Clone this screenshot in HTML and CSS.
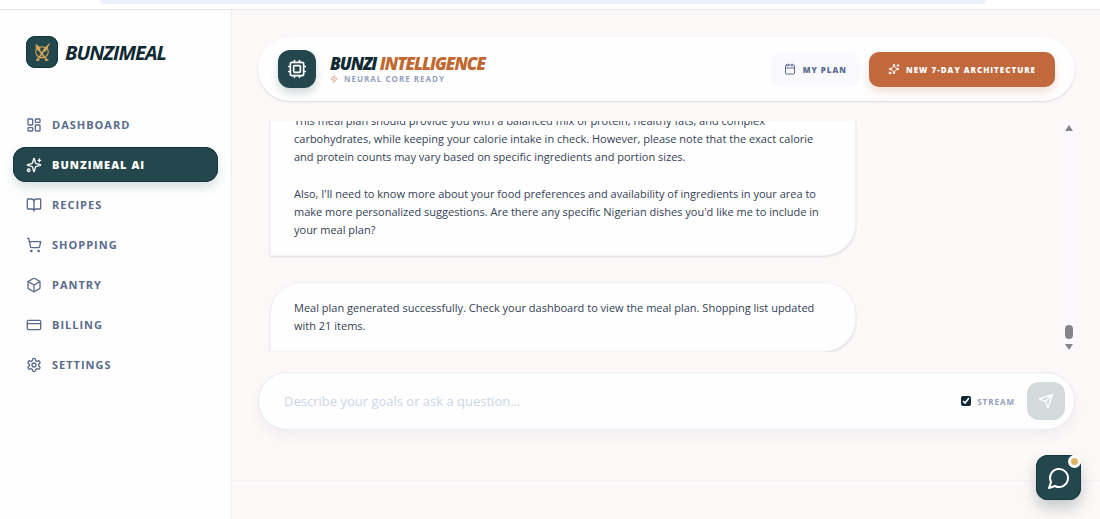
FILE: index.html
```
<!DOCTYPE html>
<html lang="en">

<head>
    <meta charset="UTF-8">
    <meta name="viewport" content="width=device-width, initial-scale=1.0">
    <title>BunziMeal AI</title>
    <link rel="stylesheet" href="styles.css">
</head>

<body>
    <!-- Top strip -->
    <div class="top-strip">
        <div class="top-pill"></div>
    </div>

    <div class="app">
        <!-- Sidebar -->
        <aside class="sidebar">
            <a href="#" class="brand">
                <span class="brand-logo">
                    <svg viewBox="0 0 32 32" width="32" height="32" fill="none" stroke="#d9a857" stroke-linecap="round">
                        <path d="M11 12a6.500 6.500 0 0 0 1 8.500M21 12a6.500 6.500 0 0 1-1 8.500M13.500 11.500q2.500-1.500 5 0" stroke-width="1.200" />
                        <path d="M13 14l7.500 9.500M11.500 23.500L21 10.500" stroke-width="1.500" />
                        <path d="M10 9l.5 4 3 2 .5-3zM23 8l-6 6.500 2 .5z" fill="#d9a857" stroke-width="1" />
                        <path d="M10.500 24h2.500M19.500 24h2.500M14 21.500h4" stroke-width="1.300" />
                    </svg>
                </span>
                <span class="brand-name">BUNZIMEAL</span>
            </a>

            <nav class="menu">
                <a href="#">
                    <svg class="icon" viewBox="0 0 24 24"><rect x="3" y="3" width="7" height="9" rx="1" /><rect x="14" y="3" width="7" height="5" rx="1" /><rect x="14" y="12" width="7" height="9" rx="1" /><rect x="3" y="16" width="7" height="5" rx="1" /></svg>
                    Dashboard
                </a>
                <a href="#" class="active">
                    <svg class="icon" viewBox="0 0 24 24"><path d="M9.937 15.500A2 2 0 0 0 8.500 14.063l-6.135-1.582a.5.5 0 0 1 0-.962L8.500 9.936A2 2 0 0 0 9.937 8.500l1.582-6.135a.5.5 0 0 1 .963 0L14.063 8.500A2 2 0 0 0 15.500 9.937l6.135 1.581a.5.5 0 0 1 0 .964L15.500 14.063a2 2 0 0 0-1.437 1.437l-1.582 6.135a.5.5 0 0 1-.963 0z" /><path d="M20 3v4M22 5h-4" /><circle cx="4" cy="20" r="2" /></svg>
                    BunziMeal AI
                </a>
                <a href="#">
                    <svg class="icon" viewBox="0 0 24 24"><path d="M12 7v14M3 18a1 1 0 0 1-1-1V4a1 1 0 0 1 1-1h5a4 4 0 0 1 4 4 4 4 0 0 1 4-4h5a1 1 0 0 1 1 1v13a1 1 0 0 1-1 1h-6a3 3 0 0 0-3 3 3 3 0 0 0-3-3z" /></svg>
                    Recipes
                </a>
                <a href="#">
                    <svg class="icon" viewBox="0 0 24 24"><circle cx="8" cy="21" r="1" /><circle cx="19" cy="21" r="1" /><path d="M2.050 2.050h2l2.660 12.420a2 2 0 0 0 2 1.580h9.780a2 2 0 0 0 1.950-1.570l1.650-7.430H5.120" /></svg>
                    Shopping
                </a>
                <a href="#">
                    <svg class="icon" viewBox="0 0 24 24"><path d="M21 8a2 2 0 0 0-1-1.730l-7-4a2 2 0 0 0-2 0l-7 4A2 2 0 0 0 3 8v8a2 2 0 0 0 1 1.730l7 4a2 2 0 0 0 2 0l7-4A2 2 0 0 0 21 16z" /><path d="M3.300 7l8.700 5 8.700-5M12 22V12" /></svg>
                    Pantry
                </a>
                <a href="#">
                    <svg class="icon" viewBox="0 0 24 24"><rect x="2" y="5" width="20" height="14" rx="2" /><path d="M2 10h20" /></svg>
                    Billing
                </a>
                <a href="#">
                    <svg class="icon" viewBox="0 0 24 24"><path d="M12.220 2h-.44a2 2 0 0 0-2 2v.18a2 2 0 0 1-1 1.730l-.43.25a2 2 0 0 1-2 0l-.15-.08a2 2 0 0 0-2.730.73l-.22.38a2 2 0 0 0 .73 2.730l.15.1a2 2 0 0 1 1 1.720v.51a2 2 0 0 1-1 1.740l-.15.09a2 2 0 0 0-.73 2.730l.22.38a2 2 0 0 0 2.730.73l.15-.08a2 2 0 0 1 2 0l.43.25a2 2 0 0 1 1 1.730V20a2 2 0 0 0 2 2h.44a2 2 0 0 0 2-2v-.18a2 2 0 0 1 1-1.730l.43-.25a2 2 0 0 1 2 0l.15.08a2 2 0 0 0 2.730-.73l.22-.39a2 2 0 0 0-.73-2.730l-.15-.08a2 2 0 0 1-1-1.740v-.5a2 2 0 0 1 1-1.740l.15-.09a2 2 0 0 0 .73-2.730l-.22-.38a2 2 0 0 0-2.730-.73l-.15.08a2 2 0 0 1-2 0l-.43-.25a2 2 0 0 1-1-1.730V4a2 2 0 0 0-2-2z" /><circle cx="12" cy="12" r="3" /></svg>
                    Settings
                </a>
            </nav>
        </aside>

        <main class="main">
            <div class="content">
                <!-- Header -->
                <header class="header">
                    <div class="header-icon">
                        <svg class="icon" viewBox="0 0 24 24"><rect x="4" y="4" width="16" height="16" rx="2" /><rect x="8" y="8" width="8" height="8" rx="1" /><path d="M15 2v2M15 20v2M2 15h2M2 9h2M20 15h2M20 9h2M9 2v2M9 20v2" /></svg>
                    </div>
                    <div class="header-text">
                        <h1>BUNZI <span>INTELLIGENCE</span></h1>
                        <p>
                            <svg class="icon" viewBox="0 0 24 24"><path d="M4 14a1 1 0 0 1-.78-1.630l9.900-10.200a.5.5 0 0 1 .86.46l-1.920 6.020A1 1 0 0 0 13 10h7a1 1 0 0 1 .78 1.630l-9.900 10.200a.5.5 0 0 1-.86-.46l1.920-6.020A1 1 0 0 0 11 14z" /></svg>
                            Neural Core Ready
                        </p>
                    </div>
                    <div class="header-actions">
                        <button type="button" class="btn btn-light">
                            <svg class="icon" viewBox="0 0 24 24"><path d="M8 2v4M16 2v4M3 10h18" /><rect x="3" y="4" width="18" height="18" rx="2" /></svg>
                            My Plan
                        </button>
                        <button type="button" class="btn btn-primary">
                            <svg class="icon" viewBox="0 0 24 24"><path d="M9.937 15.500A2 2 0 0 0 8.500 14.063l-6.135-1.582a.5.5 0 0 1 0-.962L8.500 9.936A2 2 0 0 0 9.937 8.500l1.582-6.135a.5.5 0 0 1 .963 0L14.063 8.500A2 2 0 0 0 15.500 9.937l6.135 1.581a.5.5 0 0 1 0 .964L15.500 14.063a2 2 0 0 0-1.437 1.437l-1.582 6.135a.5.5 0 0 1-.963 0z" /><path d="M20 3v4M22 5h-4" /><circle cx="4" cy="20" r="2" /></svg>
                            New 7-Day Architecture
                        </button>
                    </div>
                </header>

                <!-- Chat -->
                <section class="chat">
                    <div class="messages">
                        <div class="bubble bubble-reply">
                            <p>This meal plan should provide you with a balanced mix of protein, healthy fats, and complex carbohydrates, while keeping your calorie intake in check. However, please note that the exact calorie and protein counts may vary based on specific ingredients and portion sizes.</p>
                            <p>Also, I'll need to know more about your food preferences and availability of ingredients in your area to make more personalized suggestions. Are there any specific Nigerian dishes you'd like me to include in your meal plan?</p>
                        </div>
                        <div class="bubble bubble-last">
                            <p>Meal plan generated successfully. Check your dashboard to view the meal plan. Shopping list updated with 21 items.</p>
                        </div>
                    </div>
                    <div class="scrollbar">
                        <span class="arrow-up"></span>
                        <span class="thumb"></span>
                        <span class="arrow-down"></span>
                    </div>
                </section>

                <!-- Message form -->
                <form class="composer">
                    <input type="text" class="composer-input" aria-label="Message" placeholder="Describe your goals or ask a question...">
                    <label class="stream" for="stream">
                        <input type="checkbox" id="stream" checked>
                        Stream
                    </label>
                    <button type="button" class="send" aria-label="Send">
                        <svg class="icon" viewBox="0 0 24 24"><path d="M22 2L15 22l-4-9-9-4zM22 2L11 13" /></svg>
                    </button>
                </form>
            </div>
            <footer class="footer"></footer>
        </main>
    </div>

    <!-- Floating chat button -->
    <button type="button" class="chat-button" aria-label="Open chat">
        <svg class="icon" viewBox="0 0 24 24"><path d="M7.900 20A9 9 0 1 0 4 16.100L2 22z" /></svg>
        <span class="chat-dot"></span>
    </button>
</body>

</html>
```
FILE: styles.css
```
/* Base styles */
* {
    box-sizing: border-box;
}

body {
    font-family: "Open Sans", "Noto Sans", sans-serif;
    margin: 0;
    height: 100vh;
    display: flex;
    flex-direction: column;
    background: #fcf8f7;
    color: #334155;
}

h1,
p {
    margin: 0;
}

button,
input {
    font-family: inherit;
}

button {
    border: none;
    cursor: pointer;
}

.icon {
    width: 16px;
    height: 16px;
    flex-shrink: 0;
    fill: none;
    stroke: currentColor;
    stroke-width: 2;
    stroke-linecap: round;
    stroke-linejoin: round;
}

/* Top strip */
.top-strip {
    height: 10px;
    flex-shrink: 0;
    padding: 0 114px 0 100px;
    background: white;
    border-bottom: 1px solid #e8e8ee;
}

.top-pill {
    height: 4px;
    background: #eef0fc;
    border-radius: 0 0 10px 10px;
}

.app {
    flex: 1;
    min-height: 0;
    display: flex;
}

/* Sidebar */
.sidebar {
    width: 232px;
    flex-shrink: 0;
    padding: 26px 13px;
    background: #fefefe;
    border-right: 1px solid #efedf5;
}

.brand {
    display: flex;
    align-items: center;
    gap: 7px;
    padding-left: 13px;
    text-decoration: none;
}

.brand-logo {
    width: 32px;
    height: 32px;
    border-radius: 9px;
    background: #24474d;
    box-shadow: inset 0 0 0 1px #16343d;
}

.brand-name {
    font-size: 20px;
    font-weight: 700;
    font-style: italic;
    letter-spacing: -1px;
    color: #0f2a33;
}

.menu {
    display: flex;
    flex-direction: column;
    gap: 5px;
    margin-top: 39px;
}

.menu a {
    display: flex;
    align-items: center;
    gap: 10px;
    height: 35px;
    padding: 0 13px;
    border-radius: 13px;
    color: #5b6b8c;
    font-size: 11px;
    font-weight: 700;
    letter-spacing: 1px;
    text-transform: uppercase;
    text-decoration: none;
}

.menu a.active {
    background: #24474d;
    color: white;
    font-weight: 800;
    box-shadow: inset 0 0 0 1px #173840, 0 6px 10px rgba(36, 71, 77, 0.15);
}

/* Main column */
.main {
    flex: 1;
    min-width: 0;
    display: flex;
    flex-direction: column;
}

.content {
    flex: 1;
    min-height: 0;
    display: flex;
    flex-direction: column;
    padding: 27px 25px 50px 26px;
}

.footer {
    height: 39px;
    flex-shrink: 0;
    border-top: 1px solid #f5f3f7;
}

/* Header */
.header {
    display: flex;
    align-items: center;
    height: 64px;
    flex-shrink: 0;
    padding: 0 20px;
    border-radius: 32px;
    background: #fefefe;
    box-shadow: 0 1px 2px rgba(30, 41, 80, 0.15);
}

.header-icon {
    display: flex;
    align-items: center;
    justify-content: center;
    width: 38px;
    height: 38px;
    border-radius: 12px;
    background: #24474d;
    color: white;
    box-shadow: 0 5px 9px rgba(36, 71, 77, 0.2);
}

.header-icon .icon {
    width: 20px;
    height: 20px;
}

.header-text {
    margin-left: 14px;
}

.header-text h1 {
    font-size: 17px;
    line-height: 19px;
    font-weight: 800;
    font-style: italic;
    letter-spacing: -1px;
    color: #0f2a33;
}

.header-text h1 span {
    color: #c1672f;
}

.header-text p {
    display: flex;
    align-items: center;
    gap: 6px;
    font-size: 8px;
    line-height: 12px;
    font-weight: 700;
    letter-spacing: 1px;
    text-transform: uppercase;
    color: #94a0bd;
}

.header-text .icon {
    width: 8px;
    height: 8px;
    color: #d0825c;
}

.header-actions {
    display: flex;
    gap: 9px;
    margin-left: auto;
}

.btn {
    display: flex;
    align-items: center;
    height: 35px;
    border-radius: 10px;
    font-size: 8px;
    font-weight: 800;
    letter-spacing: 1px;
    text-transform: uppercase;
}

.btn .icon {
    width: 12px;
    height: 12px;
}

.btn-light {
    gap: 7px;
    padding: 0 13px;
    background: #f9f9fe;
    color: #5b6b8c;
}

.btn-primary {
    gap: 6px;
    padding: 0 19px;
    background: #c1693c;
    color: white;
    box-shadow: 0 5px 9px rgba(193, 105, 60, 0.2);
}

/* Chat */
.chat {
    flex: 1;
    min-height: 0;
    display: flex;
    margin: 20px 0;
}

.messages {
    flex: 1;
    display: flex;
    flex-direction: column;
    justify-content: flex-end;
    align-items: flex-start;
    gap: 26px;
    padding: 0 12px;
    overflow: hidden;
}

.bubble {
    width: 75%;
    flex-shrink: 0;
    padding: 16px 23px;
    background: #fefefe;
    border: 1px solid #f3f1f8;
    border-radius: 32px;
    box-shadow: 0 1px 2px rgba(30, 41, 80, 0.15);
    font-size: 11px;
    line-height: 18px;
    font-weight: 500;
}

.bubble p + p {
    margin-top: 19px;
}

.bubble-reply {
    border-radius: 0 0 32px 0;
}

.bubble-last {
    border-bottom-left-radius: 0;
}

.scrollbar {
    width: 12px;
    display: flex;
    flex-direction: column;
    align-items: center;
    padding: 4px 0 2px;
    background: #fbf9fd;
}

.arrow-up,
.arrow-down {
    border: 4px solid transparent;
}

.arrow-up {
    border-top: none;
    border-bottom: 6px solid #858589;
}

.arrow-down {
    border-bottom: none;
    border-top: 6px solid #858589;
}

.thumb {
    width: 8px;
    height: 14px;
    margin: auto 0 5px;
    border-radius: 4px;
    background: #858589;
}

/* Message form */
.composer {
    display: flex;
    align-items: center;
    height: 58px;
    flex-shrink: 0;
    padding: 0 9px 0 25px;
    border: 1px solid #e9e9f7;
    border-radius: 29px;
    background: #fefefe;
    box-shadow: 0 6px 12px rgba(60, 70, 140, 0.06);
}

.composer-input {
    flex: 1;
    min-width: 0;
    padding: 0;
    border: none;
    outline: none;
    background: transparent;
    font-size: 13px;
    font-weight: 500;
    color: #334155;
}

.composer-input::placeholder {
    color: #cbd5e7;
}

.stream {
    display: flex;
    align-items: center;
    gap: 6px;
    margin-right: 12px;
    font-size: 8px;
    font-weight: 700;
    letter-spacing: 1px;
    text-transform: uppercase;
    color: #94a0bd;
}

.stream input {
    width: 10px;
    height: 10px;
    margin: 0;
    accent-color: #0f2a33;
}

.send {
    display: flex;
    align-items: center;
    justify-content: center;
    width: 38px;
    height: 38px;
    padding: 0;
    border-radius: 12px;
    background: #d3dadb;
    color: white;
}

/* Floating chat button */
.chat-button {
    position: fixed;
    right: 19px;
    bottom: 19px;
    display: flex;
    align-items: center;
    justify-content: center;
    width: 45px;
    height: 45px;
    padding: 0;
    border-radius: 12px;
    background: #24474d;
    color: white;
    box-shadow: inset 0 0 0 1px #173840, 0 8px 14px rgba(36, 71, 77, 0.25);
}

.chat-button .icon {
    width: 24px;
    height: 24px;
}

.chat-dot {
    position: absolute;
    top: 0;
    right: 0;
    width: 13px;
    height: 13px;
    border: 3px solid white;
    border-radius: 50%;
    background: #e3b465;
}
```
